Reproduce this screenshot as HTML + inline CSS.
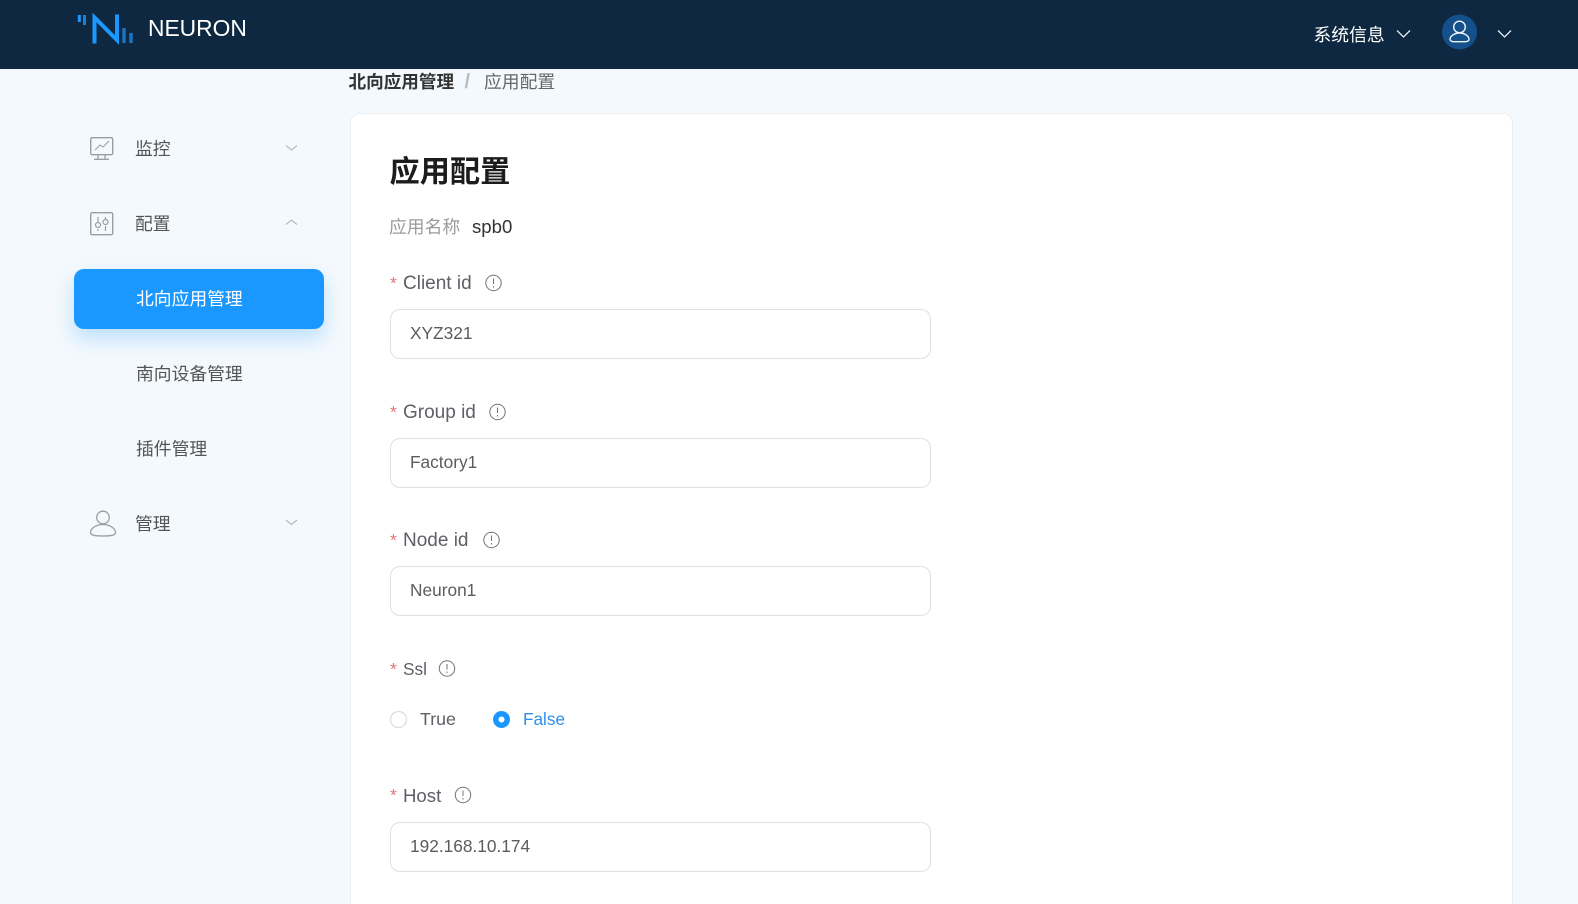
<!DOCTYPE html>
<html lang="zh-CN">
<head>
<meta charset="utf-8">
<title>Neuron</title>
<style>
html,body{margin:0;padding:0;width:1578px;height:904px;overflow:hidden;background:#f4f9fd;font-family:"Liberation Sans","Noto Sans CJK SC",sans-serif;}
#wrap{position:absolute;left:0;top:0;width:1578px;height:904px;overflow:hidden;}
.a{position:absolute;white-space:nowrap;line-height:24px;height:24px;}
#hd{position:absolute;left:0;top:0;width:1578px;height:69px;background:#0d2840;}
#card{position:absolute;left:350px;top:113px;width:1163px;height:791px;background:#fff;border:1px solid #ebeff2;border-bottom:0;border-radius:10px 10px 0 0;box-sizing:border-box;}
#btn{position:absolute;left:74px;top:269px;width:250px;height:60px;background:#1b98ff;border-radius:10px;box-shadow:0 10px 20px rgba(27,152,255,.25);}
.m{font-size:17.8px;color:#555;}
.lb{font-size:19px;color:#5e6066;}
.st{font-size:17.6px;color:#e3787c;}
.inp{position:absolute;left:390px;width:541px;height:50px;box-sizing:border-box;border:1px solid #e0e0e0;border-radius:10px;background:#fff;font-size:17.3px;color:#5c5c5c;line-height:47px;padding-left:19px;}
svg{position:absolute;overflow:visible;}
</style>
</head>
<body>
<div id="wrap">
<div id="hd"></div>
<svg style="left:0;top:0" width="200" height="69" fill="none">
<path d="M79.300 15v7" stroke="#1b98ff" stroke-width="3"/>
<path d="M84.500 15v10" stroke="#1b7fd4" stroke-width="3"/>
<path d="M94.500 43.500V17.500L117 40V14.500" stroke="#1b98ff" stroke-width="4"/>
<path d="M124 28v15" stroke="#1b74c4" stroke-width="3.400"/>
<path d="M131 33v10" stroke="#1b74c4" stroke-width="3.400"/>
</svg>
<div class="a" style="left:148px;top:16px;font-size:22.8px;color:#fff;line-height:24px;">NEURON</div>
<div class="a" style="left:1313.500px;top:22.500px;font-size:17.8px;color:#fff;">系统信息</div>
<svg style="left:0;top:0" width="1578" height="69" fill="none">
<path d="M1397 30.500l6.500 6.500 6.500-6.500" stroke="#e8eef2" stroke-width="1.300"/>
<path d="M1498 30.500l6.500 6.500 6.500-6.500" stroke="#e8eef2" stroke-width="1.300"/>
<circle cx="1459.500" cy="32" r="17.500" fill="#14508a"/>
<circle cx="1459.500" cy="27" r="5.800" stroke="#eef3f7" stroke-width="1.400"/>
<path d="M1459.500 33c-5.500 0-9.500 3.500-9.500 6.300 0 1.700 2 2.400 4 2.400h11c2 0 4-.7 4-2.400 0-2.800-4-6.300-9.500-6.300z" stroke="#eef3f7" stroke-width="1.400"/>
</svg>

<div id="btn"></div>
<svg style="left:0;top:0" width="340" height="560" fill="none" stroke="#9a9ea3">
<rect x="90.700" y="137.700" width="22" height="17" rx="1.500" stroke-width="1.400"/>
<path d="M95 150l5-5 3 2 6-6" stroke-width="1"/>
<path d="M98 155v4M105 155v4M94 159.300h15" stroke-width="1.300"/>
<rect x="90.700" y="212.700" width="22" height="22" rx="1.500" stroke-width="1.400"/>
<path d="M98 217v5M98 229v2M105.500 217v2M105.500 226v5" stroke-width="1.200"/>
<circle cx="98" cy="225" r="2.500" stroke-width="1.200"/>
<circle cx="105.500" cy="222" r="2.500" stroke-width="1.200"/>
<circle cx="103" cy="517.500" r="6.300" stroke-width="1.300"/>
<path d="M103 524.500c-7 0-12.500 4-12.500 8 0 2.500 4 3.500 12.500 3.500s12.500-1 12.500-3.500c0-4-5.500-8-12.500-8z" stroke-width="1.300"/>
<path d="M286 145.500l5.500 4.500 5.500-4.500M286 224.500l5.500-4.500 5.500 4.500M286 520l5.500 4.500 5.500-4.500" stroke="#a8acb0" stroke-width="1"/>
</svg>
<div class="a m" style="left:135px;top:137px;">监控</div>
<div class="a m" style="left:135px;top:212px;">配置</div>
<div class="a" style="left:136px;top:287px;font-size:17.8px;color:#fff;">北向应用管理</div>
<div class="a m" style="left:136px;top:362px;">南向设备管理</div>
<div class="a m" style="left:136px;top:437px;">插件管理</div>
<div class="a m" style="left:135px;top:512px;">管理</div>

<div class="a" style="left:348.500px;top:70px;font-size:17.6px;font-weight:700;color:#333;">北向应用管理</div>
<div class="a" style="left:464.500px;top:70px;font-size:20px;color:#bbb;font-weight:700;">/</div>
<div class="a" style="left:484px;top:70px;font-size:17.8px;color:#666;">应用配置</div>

<div id="card"></div>
<div class="a" style="left:389.500px;top:155px;height:36px;line-height:36px;font-size:30.200px;font-weight:700;color:#1c1c1c;">应用配置</div>
<div class="a" style="left:389px;top:215px;font-size:17.8px;color:#9a9a9a;">应用名称</div>
<div class="a" style="left:472px;top:215px;font-size:18.6px;color:#333;">spb0</div>

<div class="a st" style="left:390px;top:271px;">*</div>
<div class="a lb" style="left:403px;top:272px;">Client id</div>
<div class="inp" style="top:309px;">XYZ321</div>

<div class="a st" style="left:390px;top:400px;">*</div>
<div class="a lb" style="left:403px;top:401px;">Group id</div>
<div class="inp" style="top:438px;">Factory1</div>

<div class="a st" style="left:390px;top:528px;">*</div>
<div class="a lb" style="left:403px;top:529px;">Node id</div>
<div class="inp" style="top:566px;">Neuron1</div>

<div class="a st" style="left:390px;top:657px;">*</div>
<div class="a lb" style="left:403px;top:657px;font-size:17.3px;">Ssl</div>

<div class="a lb" style="left:420px;top:707px;font-size:17.8px;">True</div>
<div class="a lb" style="left:523px;top:707px;color:#2f8fe8;font-size:17.2px;">False</div>

<div class="a st" style="left:390px;top:783px;">*</div>
<div class="a lb" style="left:403px;top:784px;font-size:18.6px;">Host</div>
<div class="inp" style="top:822px;">192.168.10.174</div>

<svg style="left:0;top:0" width="1578" height="904" fill="none">
<g stroke="#6f7377" stroke-width="1">
<circle cx="493.500" cy="283" r="7.700"/><path d="M493.500 278.500v5.500M493.500 286v1.500"/>
<circle cx="497.500" cy="412" r="7.700"/><path d="M497.500 407.500v5.500M497.500 415v1.500"/>
<circle cx="491.500" cy="540" r="7.700"/><path d="M491.500 535.500v5.500M491.500 543v1.500"/>
<circle cx="447" cy="668.500" r="7.700"/><path d="M447 664v5.500M447 671.500v1.500"/>
<circle cx="463" cy="795" r="7.700"/><path d="M463 790.500v5.500M463 798v1.500"/>
</g>
<circle cx="398.500" cy="719.500" r="8" stroke="#dcdcdc" stroke-width="1.200" fill="#fff"/>
<circle cx="501.500" cy="719.500" r="8.500" fill="#1b98ff"/>
<circle cx="501.500" cy="719.500" r="3" fill="#fff"/>
</svg>
</div>
</body>
</html>
